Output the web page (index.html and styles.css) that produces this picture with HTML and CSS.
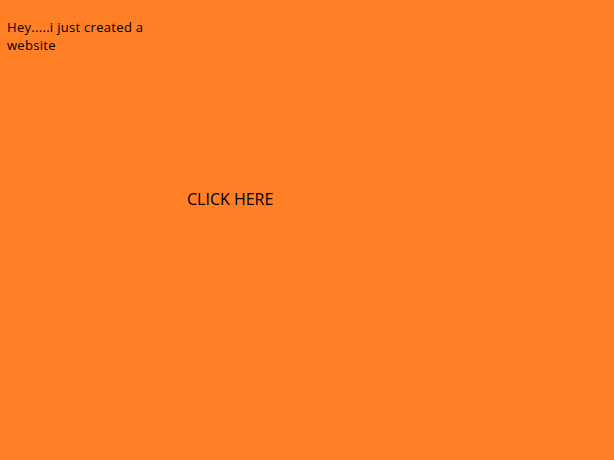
FILE: index.html
```html
<!DOCTYPE html>
<html>
<head>
<meta charset="utf-8">
<link rel="stylesheet" href="styles.css">
</head>
<body>
<p class="intro">Hey.....i just created a website</p>
<a class="cta">CLICK HERE</a>
</body>
</html>
```
FILE: styles.css
```css
html, body {
  margin: 0;
  background: #ff7f27;
  height: 100%;
}
body {
  padding: 18px 0 0 7px;
  box-sizing: border-box;
  font-family: "Open Sans", sans-serif;
  color: #000;
}
.intro {
  margin: 0;
  width: 150px;
  font-size: 13px;
  line-height: 18px;
  letter-spacing: 0.3px;
}
.cta {
  display: block;
  margin: 135px 0 0 180px;
  font-size: 16px;
  line-height: 20px;
  letter-spacing: 0;
}
```
